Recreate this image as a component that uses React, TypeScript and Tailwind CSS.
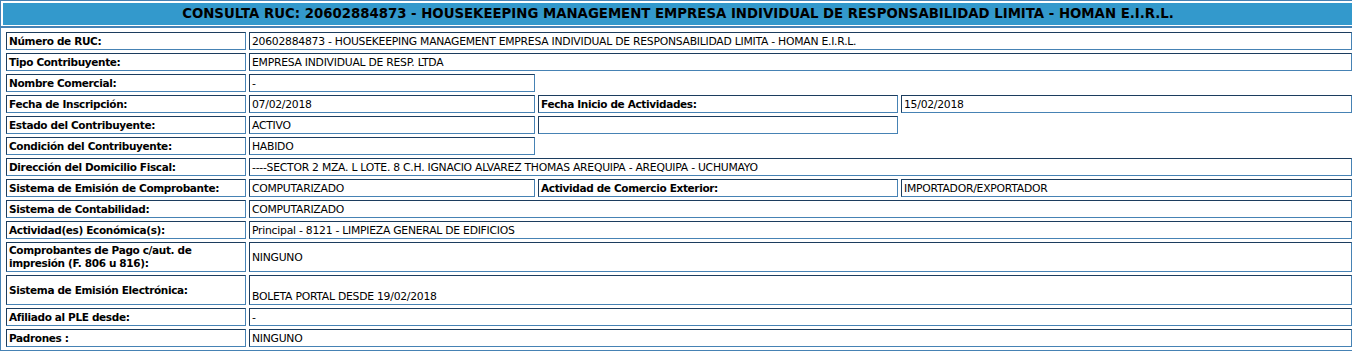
const font = "font-['Verdana','DejaVu_Sans',sans-serif]";

type Cell = { text?: string; bold?: boolean; span?: string; lines?: string[]; low?: boolean };

function Box({ c }: { c: Cell }) {
  return (
    <div
      className={`${c.span ?? ""} flex items-center border border-t-[#1c3d5e] border-l-[#1c3d5e] border-b-[#4682b4] border-r-[#4682b4] px-[2px] leading-[13px] text-black whitespace-nowrap overflow-hidden ${c.bold ? "font-bold text-[10.5px] tracking-[-0.35px]" : "text-[10.8px] tracking-[-0.25px]"}`}
    >
      {c.lines ? (
        <div>
          {c.lines.map((l) => (
            <div key={l}>{l}</div>
          ))}
        </div>
      ) : (
        <div className={c.low ? "pt-[13px]" : ""}>{c.text}</div>
      )}
    </div>
  );
}

const rows: Cell[][] = [
  [
    { text: "Número de RUC:", bold: true },
    { text: "20602884873 - HOUSEKEEPING MANAGEMENT EMPRESA INDIVIDUAL DE RESPONSABILIDAD LIMITA - HOMAN E.I.R.L.", span: "col-span-3" },
  ],
  [
    { text: "Tipo Contribuyente:", bold: true },
    { text: "EMPRESA INDIVIDUAL DE RESP. LTDA", span: "col-span-3" },
  ],
  [
    { text: "Nombre Comercial:", bold: true },
    { text: "-" },
  ],
  [
    { text: "Fecha de Inscripción:", bold: true },
    { text: "07/02/2018" },
    { text: "Fecha Inicio de Actividades:", bold: true },
    { text: "15/02/2018" },
  ],
  [
    { text: "Estado del Contribuyente:", bold: true },
    { text: "ACTIVO" },
    { text: "" },
  ],
  [
    { text: "Condición del Contribuyente:", bold: true },
    { text: "HABIDO" },
  ],
  [
    { text: "Dirección del Domicilio Fiscal:", bold: true },
    { text: "----SECTOR 2 MZA. L LOTE. 8 C.H. IGNACIO ALVAREZ THOMAS AREQUIPA - AREQUIPA - UCHUMAYO", span: "col-span-3" },
  ],
  [
    { text: "Sistema de Emisión de Comprobante:", bold: true },
    { text: "COMPUTARIZADO" },
    { text: "Actividad de Comercio Exterior:", bold: true },
    { text: "IMPORTADOR/EXPORTADOR" },
  ],
  [
    { text: "Sistema de Contabilidad:", bold: true },
    { text: "COMPUTARIZADO", span: "col-span-3" },
  ],
  [
    { text: "Actividad(es) Económica(s):", bold: true },
    { text: "Principal - 8121 - LIMPIEZA GENERAL DE EDIFICIOS", span: "col-span-3" },
  ],
  [
    { lines: ["Comprobantes de Pago c/aut. de", "impresión (F. 806 u 816):"], bold: true },
    { text: "NINGUNO", span: "col-span-3" },
  ],
  [
    { text: "Sistema de Emisión Electrónica:", bold: true },
    { text: "BOLETA PORTAL DESDE 19/02/2018", span: "col-span-3", low: true },
  ],
  [
    { text: "Afiliado al PLE desde:", bold: true },
    { text: "-", span: "col-span-3" },
  ],
  [
    { text: "Padrones :", bold: true },
    { text: "NINGUNO", span: "col-span-3" },
  ],
];

export default function App() {
  return (
    <div className={`w-[1352px] h-[353px] overflow-hidden bg-white ${font}`}>
      <div className="w-[1360px] h-[351px] border border-[#4682b4] pt-[2px] pl-[2px]">
        {/* encabezado */}
        <div className="w-[1350px] h-[22px] bg-[#3399cc] flex items-center justify-center text-[13.3px] font-bold text-black">
          CONSULTA RUC: 20602884873 - HOUSEKEEPING MANAGEMENT EMPRESA INDIVIDUAL DE RESPONSABILIDAD LIMITA - HOMAN E.I.R.L.
        </div>
        <div className="-ml-[2px] mt-[1px] h-[2px] w-[1358px] bg-[#4682b4]" />

        {/* datos */}
        <div className="mt-[4px] ml-[3px] grid grid-cols-[240px_286px_360px_451px] grid-rows-[repeat(10,18px)_30px_30px_18px_18px] gap-[3px]">
          {rows.map((r, i) =>
            r
              .map((c, j) => <Box key={`${i}-${j}`} c={c} />)
              .concat(
                r.length < 4 && !r.some((c) => c.span)
                  ? Array.from({ length: 4 - r.length }).map((_, k) => <div key={`${i}-e${k}`} />)
                  : []
              )
          )}
        </div>
      </div>
    </div>
  );
}
